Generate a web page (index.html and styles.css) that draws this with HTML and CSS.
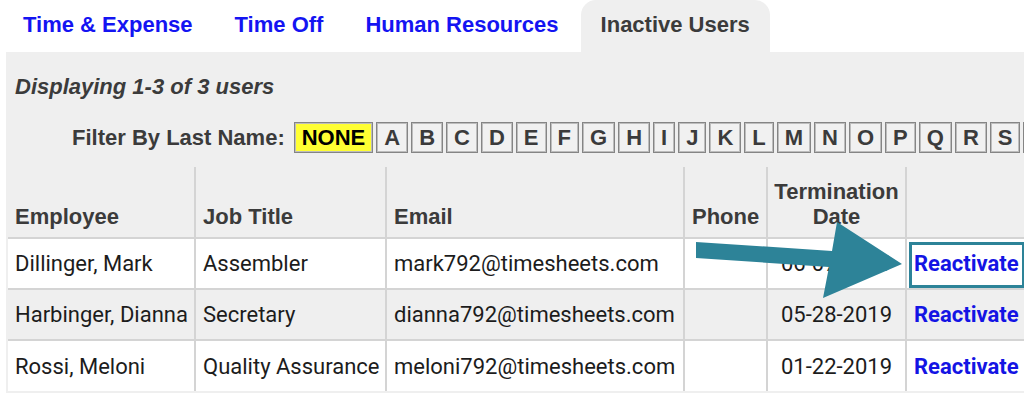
FILE: index.html
```html
<!DOCTYPE html>
<html>

<head>
    <meta charset="utf-8">
    <title>Inactive Users</title>
    <link rel="stylesheet" href="styles.css">
</head>

<body>
    <div class="page">
        <ul class="tabs">
            <li><a class="tab">Time &amp; Expense</a></li>
            <li><a class="tab">Time Off</a></li>
            <li><a class="tab">Human Resources</a></li>
            <li><a class="tab tab-active">Inactive Users</a></li>
        </ul>

        <div class="panel">
            <div class="summary">Displaying 1-3 of 3 users</div>

            <div class="filter">
                <span class="filter-label">Filter By Last Name:</span>
                <ul class="letters">
                    <li class="letter letter-selected">NONE</li>
                    <li class="letter">A</li>
                    <li class="letter">B</li>
                    <li class="letter">C</li>
                    <li class="letter">D</li>
                    <li class="letter">E</li>
                    <li class="letter">F</li>
                    <li class="letter">G</li>
                    <li class="letter">H</li>
                    <li class="letter">I</li>
                    <li class="letter">J</li>
                    <li class="letter">K</li>
                    <li class="letter">L</li>
                    <li class="letter">M</li>
                    <li class="letter">N</li>
                    <li class="letter">O</li>
                    <li class="letter">P</li>
                    <li class="letter">Q</li>
                    <li class="letter">R</li>
                    <li class="letter">S</li>
                    <li class="letter">T</li>
                </ul>
            </div>

            <table class="users">
                <colgroup>
                    <col class="col-employee">
                    <col class="col-title">
                    <col class="col-email">
                    <col class="col-phone">
                    <col class="col-date">
                    <col class="col-action">
                </colgroup>
                <thead>
                    <tr>
                        <th>Employee</th>
                        <th>Job Title</th>
                        <th>Email</th>
                        <th>Phone</th>
                        <th class="center">Termination Date</th>
                        <th></th>
                    </tr>
                </thead>
                <tbody>
                    <tr>
                        <td>Dillinger, Mark</td>
                        <td>Assembler</td>
                        <td>mark792@timesheets.com</td>
                        <td></td>
                        <td class="center">06-07-2019</td>
                        <td><a class="reactivate callout">Reactivate</a></td>
                    </tr>
                    <tr class="alt">
                        <td>Harbinger, Dianna</td>
                        <td>Secretary</td>
                        <td>dianna792@timesheets.com</td>
                        <td></td>
                        <td class="center">05-28-2019</td>
                        <td><a class="reactivate">Reactivate</a></td>
                    </tr>
                    <tr>
                        <td>Rossi, Meloni</td>
                        <td>Quality Assurance</td>
                        <td>meloni792@timesheets.com</td>
                        <td></td>
                        <td class="center">01-22-2019</td>
                        <td><a class="reactivate">Reactivate</a></td>
                    </tr>
                </tbody>
            </table>
        </div>

        <!-- seta de destaque sobre o botao -->
        <svg class="arrow" width="1024" height="393" viewBox="0 0 1024 393">
            <polygon points="696,242 832,251 837,222 902,264 823,298 829,267 696,258" fill="#2d8398" />
        </svg>
    </div>
</body>

</html>
```

FILE: styles.css
```css
* {
    box-sizing: border-box;
}

html,
body {
    margin: 0;
    overflow: hidden;
    background-color: #ffffff;
    font-family: 'Liberation Sans', Arial, sans-serif;
}

.page {
    position: relative;
    width: 1024px;
    height: 393px;
    overflow: hidden;
}

.tabs {
    display: flex;
    gap: 2px;
    list-style: none;
    margin: 0;
    padding: 0 0 0 3px;
}

.tab {
    display: block;
    padding: 12px 20px 14px;
    font-size: 22px;
    font-weight: bold;
    line-height: 26px;
    color: #1414f2;
    border-radius: 15px 15px 0 0;
    white-space: nowrap;
}

.tab-active {
    color: #3b3b3b;
    background-color: #efefef;
}

.panel {
    margin-left: 6px;
    padding: 22px 0 0 0;
    background-color: #efefef;
    height: 341px;
}

.summary {
    padding-left: 9px;
    font-size: 22px;
    font-weight: bold;
    font-style: italic;
    line-height: 25px;
    color: #3b3b3b;
}

.filter {
    display: flex;
    align-items: center;
    margin: 23px 0 0 66px;
    white-space: nowrap;
}

.filter-label {
    font-size: 22px;
    font-weight: bold;
    line-height: 25px;
    color: #3b3b3b;
    margin-right: 9px;
}

.letters {
    display: flex;
    gap: 3px;
    list-style: none;
    margin: 0;
    padding: 0;
}

.letter {
    padding: 2px 7px;
    font-size: 22px;
    font-weight: bold;
    line-height: 25px;
    color: #3b3b3b;
    background-color: #f1f1f1;
    border: 1px solid #858585;
    box-shadow: inset 0 0 0 1px #bdbdbd;
}

.letter-selected {
    color: #000000;
    background-color: #ffff33;
}

.users {
    margin: 14px 0 0 2px;
    width: 1020px;
    table-layout: fixed;
    border-collapse: collapse;
    border-style: hidden;
}

.col-employee {
    width: 187px;
}

.col-title {
    width: 191px;
}

.col-email {
    width: 298px;
}

.col-phone {
    width: 83px;
}

.col-date {
    width: 139px;
}

.users th,
.users td {
    border: 2px solid #d4d4d4;
    text-align: left;
    white-space: nowrap;
}

.users th {
    height: 71px;
    padding: 0 4px 8px 7px;
    vertical-align: bottom;
    font-size: 22px;
    font-weight: bold;
    line-height: 25px;
    color: #3b3b3b;
    white-space: normal;
}

.users td {
    height: 51px;
    padding: 0 4px 0 7px;
    vertical-align: middle;
    font-family: Roboto, 'Liberation Sans', sans-serif;
    font-size: 22px;
    color: #1c1c1c;
    background-color: #ffffff;
}

.users tr.alt td {
    background-color: #efefef;
}

.users .center {
    text-align: center;
    padding-left: 4px;
}

.reactivate {
    font-weight: bold;
    color: #1414e4;
}

.callout {
    display: inline-block;
    margin: -9px -6px -12px -5px;
    padding: 6px 3px 9px 2px;
    border: 3px solid #2d8398;
}

.arrow {
    position: absolute;
    top: 0;
    left: 0;
    pointer-events: none;
}
```
